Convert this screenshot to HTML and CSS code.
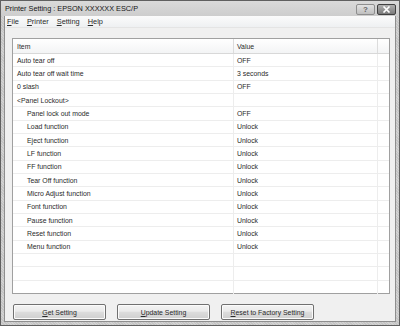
FILE: index.html
```html
<!DOCTYPE html>
<html>
<head>
<meta charset="utf-8">
<link rel="stylesheet" href="styles.css">
</head>
<body>
<div class="window">
  <div class="titlebar">
    <span class="title">Printer Setting : EPSON XXXXXX ESC/P</span>
    <div class="caption-btns">
      <span class="cbtn help">?</span>
      <span class="cbtn close">
        <svg width="9" height="7" viewBox="0 0 9 7"><path d="M1.5 0.5 L7.5 6.5 M7.5 0.5 L1.5 6.5" stroke="#fff" stroke-width="1.6"/></svg>
      </span>
    </div>
  </div>
  <div class="frame">
    <div class="menubar">
      <span class="mi"><u>F</u>ile</span>
      <span class="mi"><u>P</u>rinter</span>
      <span class="mi"><u>S</u>etting</span>
      <span class="mi"><u>H</u>elp</span>
    </div>
    <div class="client">
      <div class="list">
        <div class="row head"><span class="c1">Item</span><span class="c2">Value</span><span class="c3"></span></div>
        <div class="row"><span class="c1">Auto tear off</span><span class="c2">OFF</span><span class="c3"></span></div>
        <div class="row"><span class="c1">Auto tear off wait time</span><span class="c2">3 seconds</span><span class="c3"></span></div>
        <div class="row"><span class="c1">0 slash</span><span class="c2">OFF</span><span class="c3"></span></div>
        <div class="row"><span class="c1">&lt;Panel Lockout&gt;</span><span class="c2"></span><span class="c3"></span></div>
        <div class="row"><span class="c1 ind">Panel lock out mode</span><span class="c2">OFF</span><span class="c3"></span></div>
        <div class="row"><span class="c1 ind">Load function</span><span class="c2">Unlock</span><span class="c3"></span></div>
        <div class="row"><span class="c1 ind">Eject function</span><span class="c2">Unlock</span><span class="c3"></span></div>
        <div class="row"><span class="c1 ind">LF function</span><span class="c2">Unlock</span><span class="c3"></span></div>
        <div class="row"><span class="c1 ind">FF function</span><span class="c2">Unlock</span><span class="c3"></span></div>
        <div class="row"><span class="c1 ind">Tear Off function</span><span class="c2">Unlock</span><span class="c3"></span></div>
        <div class="row"><span class="c1 ind">Micro Adjust function</span><span class="c2">Unlock</span><span class="c3"></span></div>
        <div class="row"><span class="c1 ind">Font function</span><span class="c2">Unlock</span><span class="c3"></span></div>
        <div class="row"><span class="c1 ind">Pause function</span><span class="c2">Unlock</span><span class="c3"></span></div>
        <div class="row"><span class="c1 ind">Reset function</span><span class="c2">Unlock</span><span class="c3"></span></div>
        <div class="row"><span class="c1 ind">Menu function</span><span class="c2">Unlock</span><span class="c3"></span></div>
        <div class="row"><span class="c1"></span><span class="c2"></span><span class="c3"></span></div>
        <div class="row"><span class="c1"></span><span class="c2"></span><span class="c3"></span></div>
        <div class="row last"><span class="c1"></span><span class="c2"></span><span class="c3"></span></div>
      </div>
      <div class="buttons">
        <button class="btn"><u>G</u>et Setting</button>
        <button class="btn"><u>U</u>pdate Setting</button>
        <button class="btn"><u>R</u>eset to Factory Setting</button>
      </div>
    </div>
  </div>
</div>
</body>
</html>
```

FILE: styles.css
```css
* { box-sizing: border-box; }
html, body { margin: 0; padding: 0; }
body {
  width: 400px;
  height: 326px;
  overflow: hidden;
  font-family: "Liberation Sans", Arial, sans-serif;
  color: #2a2a2a;
  background: #fff;
}
.window {
  width: 400px;
  height: 326px;
  display: flex;
  flex-direction: column;
  border: 1px solid #606060;
  background: repeating-linear-gradient(45deg, #c4c4c4 0 1px, #d2d2d2 1px 2px);
}
.titlebar {
  height: 15px;
  flex: none;
  display: flex;
  align-items: center;
  justify-content: space-between;
  padding: 0 3px 0 4px;
  background: linear-gradient(#dadada, #cdcdcd);
}
.title {
  font-size: 7.3px;
  color: #151515;
}
.caption-btns {
  display: flex;
  gap: 2px;
  align-items: flex-start;
  height: 11px;
  margin-top: 1px;
}
.cbtn {
  height: 11px;
  border-radius: 2px;
  display: flex;
  align-items: center;
  justify-content: center;
  font-size: 8px;
  font-weight: bold;
}
.cbtn.help {
  width: 19px;
  color: #666;
  border: 1px solid #8e8e8e;
  background: linear-gradient(#e2e2e2, #bfbfbf);
}
.cbtn.close {
  width: 19px;
  border: 1px solid #404040;
  background: linear-gradient(#b0b0b0, #7a7a7a);
}
.frame {
  flex: 1;
  display: flex;
  flex-direction: column;
  margin: 0 3px 3px;
  border: 1px solid #8e8e8e;
  border-top: none;
}
.menubar {
  height: 12px;
  flex: none;
  display: flex;
  align-items: center;
  padding-left: 1px;
  font-size: 7.4px;
  background: linear-gradient(#fbfbfb, #eef0f2);
  border-bottom: 1px solid #e4e4e4;
}
.mi { padding: 0 4px 0 1px; margin-right: 3px; }
.client {
  flex: 1;
  background: #f0f0f0;
  display: flex;
  flex-direction: column;
  padding: 10px 6px 0 7px;
}
.list {
  width: 378px;
  height: 256px;
  background: #fff;
  border: 1px solid #a0a0a0;
  display: flex;
  flex-direction: column;
  font-size: 6.9px;
}
.row {
  display: flex;
  height: 13.33px;
  flex: none;
  border-bottom: 1px solid #ededed;
  align-items: stretch;
}
.row.last { border-bottom: none; }
.row.head {
  height: 15px;
  background: linear-gradient(#ffffff, #f3f4f5);
  border-bottom: 1px solid #d8d8d8;
}
.row > span {
  display: flex;
  align-items: center;
  border-right: 1px solid #ededed;
}
.row.head > span { border-right-color: #dcdcdc; }
.c1 { width: 221px; padding-left: 4px; }
.c1.ind { padding-left: 14px; }
.c2 { width: 144px; padding-left: 3px; }
.c3 { flex: 1; border-right: none !important; }
.buttons {
  display: flex;
  gap: 11px;
  margin-top: 10px;
  padding-left: 1px;
}
.btn {
  width: 93px;
  height: 16px;
  padding: 0;
  font-family: "Liberation Sans", Arial, sans-serif;
  font-size: 6.9px;
  color: #2a2a2a;
  border: 1px solid #707070;
  border-radius: 2px;
  background: linear-gradient(#f3f3f3 0%, #ebebeb 45%, #dddddd 50%, #cfcfcf 100%);
  box-shadow: inset 0 0 0 1px #fbfbfb;
}
```
